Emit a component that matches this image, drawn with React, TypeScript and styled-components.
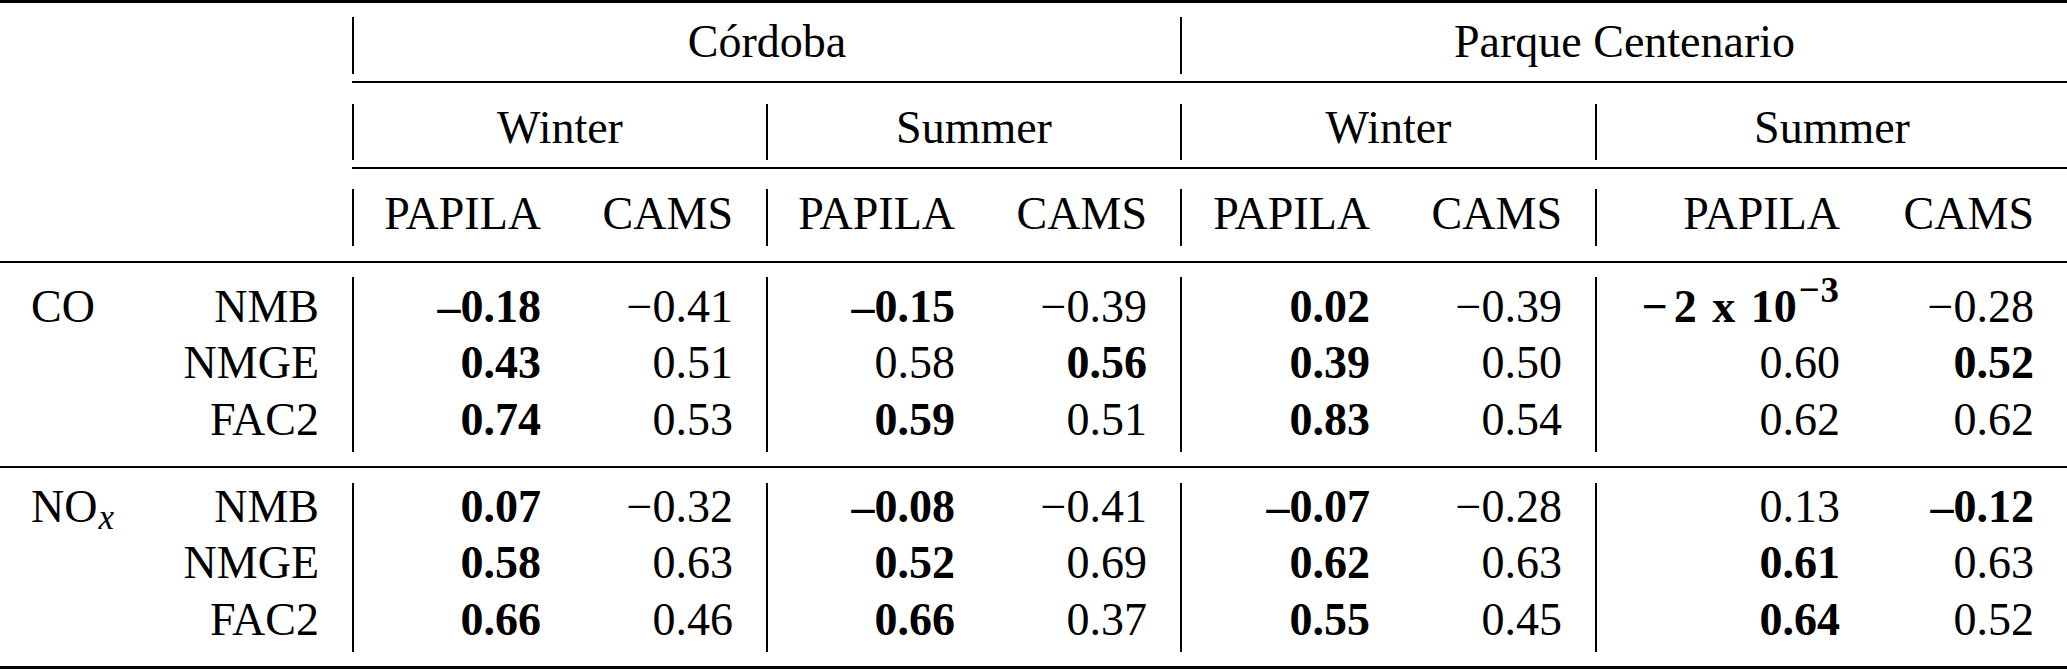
import React from "react";
import styled, { createGlobalStyle } from "styled-components";

const GlobalStyle = createGlobalStyle`
  html, body {
    margin: 0;
    padding: 0;
    background: #ffffff;
    overflow: hidden;
  }
  body {
    font-family: "Liberation Serif", "Times New Roman", serif;
    color: #000000;
  }
`;

// column widths in px, summing to the page width
const COLS = [160, 192, 222, 192, 222, 192, 223, 192, 278, 194];

type Align = "left" | "right" | "center";

const Table = styled.table`
  width: 2067px;
  table-layout: fixed;
  border-collapse: separate;
  border-spacing: 0;
  font-family: "Liberation Serif", "Times New Roman", serif;
  font-size: 46px;
  line-height: 48px;
`;

const Row = styled.tr<{ $h: number }>`
  height: ${(p) => p.$h}px;
`;

const Cell = styled.td<{
  $align?: Align;
  $rule?: boolean;
  $pt?: number;
  $bold?: boolean;
}>`
  padding: ${(p) => p.$pt ?? 0}px ${(p) => (p.$align === "right" ? 33 : 0)}px 0
    ${(p) => (p.$align === "left" ? 31 : 0)}px;
  text-align: ${(p) => p.$align ?? "center"};
  vertical-align: top;
  white-space: nowrap;
  border-left: ${(p) => (p.$rule ? "2px solid #000" : "none")};
  font-weight: ${(p) => (p.$bold ? 700 : 400)};
`;

const Line = styled.td<{ $on?: boolean }>`
  padding: 0;
  font-size: 0;
  line-height: 0;
  background: ${(p) => (p.$on ? "#000" : "transparent")};
`;

const Sub = styled.sub`
  font-style: italic;
  font-size: 0.76em;
  line-height: 0;
  vertical-align: -7px;
  margin-left: 1px;
`;

const Expo = styled.span`
  word-spacing: 4px;
`;

const BigMinus = styled.span`
  margin-right: 6px;
`;

const Sup = styled.sup`
  font-size: 0.8em;
  line-height: 0;
  vertical-align: 20px;
  margin-left: 2px;
  letter-spacing: 1px;
  word-spacing: 0;
`;

const Gap = ({ h }: { h: number }) => (
  <Row $h={h}>
    <Line colSpan={10} />
  </Row>
);

const Rule = ({ h, from = 0 }: { h: number; from?: number }) => (
  <Row $h={h}>
    {from > 0 && <Line colSpan={from} />}
    <Line colSpan={10 - from} $on />
  </Row>
);

const renderValue = (raw: string) => {
  const v = raw.replace(/^\*/, "");
  if (v === "EXP") {
    return (
      <Expo>
        <BigMinus>−</BigMinus>2 x 10<Sup>−3</Sup>
      </Expo>
    );
  }
  return v;
};

type DataRow = { metric: string; h: number; pt: number; vals: string[] };

const groups: { species: React.ReactNode; rows: DataRow[] }[] = [
  {
    species: "CO",
    rows: [
      {
        metric: "NMB",
        h: 62,
        pt: 6,
        vals: ["*–0.18", "−0.41", "*–0.15", "−0.39", "*0.02", "−0.39", "*EXP", "−0.28"],
      },
      {
        metric: "NMGE",
        h: 57,
        pt: 0,
        vals: ["*0.43", "0.51", "0.58", "*0.56", "*0.39", "0.50", "0.60", "*0.52"],
      },
      {
        metric: "FAC2",
        h: 56,
        pt: 0,
        vals: ["*0.74", "0.53", "*0.59", "0.51", "*0.83", "0.54", "0.62", "0.62"],
      },
    ],
  },
  {
    species: (
      <>
        NO<Sub>x</Sub>
      </>
    ),
    rows: [
      {
        metric: "NMB",
        h: 56,
        pt: 0,
        vals: ["*0.07", "−0.32", "*–0.08", "−0.41", "*–0.07", "−0.28", "0.13", "*–0.12"],
      },
      {
        metric: "NMGE",
        h: 57,
        pt: 0,
        vals: ["*0.58", "0.63", "*0.52", "0.69", "*0.62", "0.63", "*0.61", "0.63"],
      },
      {
        metric: "FAC2",
        h: 56,
        pt: 0,
        vals: ["*0.66", "0.46", "*0.66", "0.37", "*0.55", "0.45", "*0.64", "0.52"],
      },
    ],
  },
];

const sites = ["Córdoba", "Parque Centenario"];
const seasons = ["Winter", "Summer", "Winter", "Summer"];
const models = ["PAPILA", "CAMS"];

const DataBlock = ({ group }: { group: (typeof groups)[number] }) => (
  <>
    {group.rows.map((r, i) => (
      <Row $h={r.h} key={r.metric}>
        <Cell $align="left" $pt={r.pt}>
          {i === 0 ? group.species : null}
        </Cell>
        <Cell $align="right" $pt={r.pt}>
          {r.metric}
        </Cell>
        {r.vals.map((v, j) => (
          <Cell
            key={j}
            $align="right"
            $pt={r.pt}
            $rule={j % 2 === 0}
            $bold={v.startsWith("*")}
          >
            {renderValue(v)}
          </Cell>
        ))}
      </Row>
    ))}
  </>
);

export default function App() {
  return (
    <>
      <GlobalStyle />
      <Table>
        <colgroup>
          {COLS.map((w, i) => (
            <col key={i} style={{ width: w }} />
          ))}
        </colgroup>
        <tbody>
          <Rule h={3} />
          <Gap h={14} />
          <Row $h={57}>
            <Cell colSpan={2} />
            {sites.map((s) => (
              <Cell key={s} colSpan={4} $rule $pt={1}>
                {s}
              </Cell>
            ))}
          </Row>
          <Gap h={7} />
          <Rule h={2} from={2} />
          <Gap h={21} />
          <Row $h={56}>
            <Cell colSpan={2} />
            {seasons.map((s, i) => (
              <Cell key={i} colSpan={2} $rule>
                {s}
              </Cell>
            ))}
          </Row>
          <Gap h={7} />
          <Rule h={2} from={2} />
          <Gap h={20} />
          <Row $h={57}>
            <Cell colSpan={2} />
            {seasons.map((_, i) =>
              models.map((m, j) => (
                <Cell key={`${i}-${m}`} $align="right" $rule={j === 0} $pt={1}>
                  {m}
                </Cell>
              )),
            )}
          </Row>
          <Gap h={15} />
          <Rule h={2} />
          <Gap h={14} />
          <DataBlock group={groups[0]} />
          <Gap h={14} />
          <Rule h={2} />
          <Gap h={15} />
          <DataBlock group={groups[1]} />
          <Gap h={14} />
          <Rule h={3} />
        </tbody>
      </Table>
    </>
  );
}
